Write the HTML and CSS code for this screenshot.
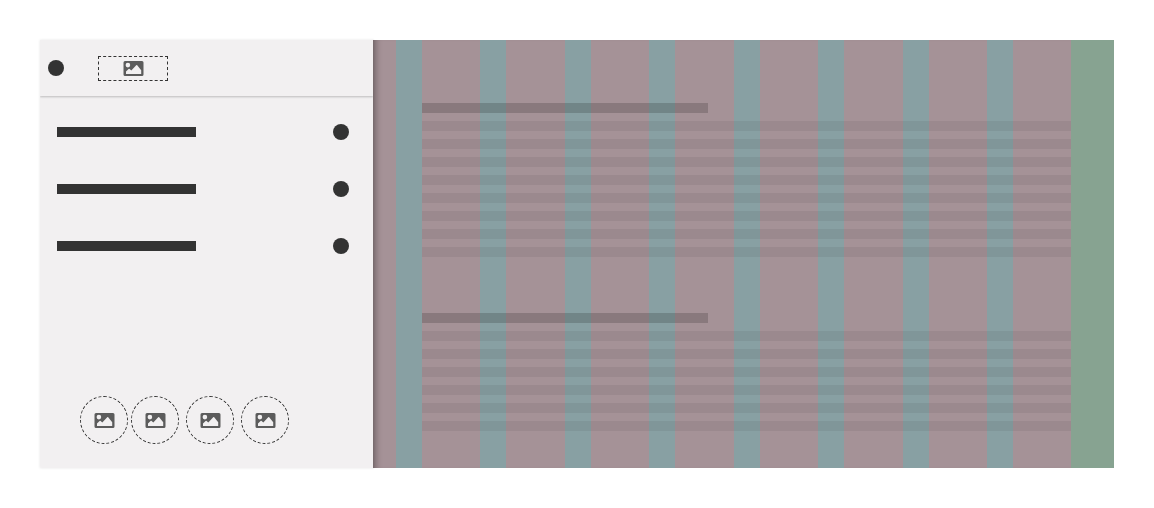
FILE: index.html
```html
<!DOCTYPE html>
<html lang="en">
<head>
<meta charset="utf-8">
<meta name="viewport" content="width=device-width, initial-scale=1">
<title>Navigation drawer</title>
<link rel="stylesheet" href="styles.css">
</head>
<body>
<svg class="defs" aria-hidden="true">
  <symbol id="image" viewBox="0 0 21 17">
    <path fill="#5c5c5c" fill-rule="evenodd" d="M2 1h17a1.500 1.500 0 0 1 1.500 1.500v12a1.500 1.500 0 0 1-1.500 1.500h-17a1.500 1.500 0 0 1-1.500-1.500v-12a1.500 1.500 0 0 1 1.500-1.500zM4.900 2.800a2.300 2.300 0 1 0 0 4.600a2.300 2.300 0 0 0 0-4.600zM3 14h15.200V10.200L14.200 5.300q-.5-.5-1 0L8.300 10.500L6.600 8.900q-.5-.4-1 0L3 11.500z"/>
  </symbol>
</svg>
<div class="layout">
  <aside class="drawer">
    <header class="drawer-header">
      <button class="dot" type="button" aria-label="Close"></button>
      <a class="logo" href="#" aria-label="Home"><svg class="icon"><use href="#image"/></svg></a>
    </header>
    <ul class="menu">
      <li class="menu-item"><span class="label"></span><button class="dot" type="button" aria-label="Expand"></button></li>
      <li class="menu-item"><span class="label"></span><button class="dot" type="button" aria-label="Expand"></button></li>
      <li class="menu-item"><span class="label"></span><button class="dot" type="button" aria-label="Expand"></button></li>
    </ul>
    <nav class="social" aria-label="Social links">
      <a class="badge" href="#" aria-label="Link 1"><svg class="icon"><use href="#image"/></svg></a>
      <a class="badge" href="#" aria-label="Link 2"><svg class="icon"><use href="#image"/></svg></a>
      <a class="badge" href="#" aria-label="Link 3"><svg class="icon"><use href="#image"/></svg></a>
      <a class="badge" href="#" aria-label="Link 4"><svg class="icon"><use href="#image"/></svg></a>
    </nav>
  </aside>
  <main class="page">
    <div class="columns" aria-hidden="true">
      <i></i><i></i><i></i><i></i><i></i><i></i><i></i><i></i>
    </div>
    <div class="content">
      <section class="block">
        <div class="title"></div>
        <div class="line"></div><div class="line"></div><div class="line"></div><div class="line"></div>
        <div class="line"></div><div class="line"></div><div class="line"></div><div class="line"></div>
      </section>
      <section class="block">
        <div class="title"></div>
        <div class="line"></div><div class="line"></div><div class="line"></div>
        <div class="line"></div><div class="line"></div><div class="line"></div>
      </section>
    </div>
  </main>
</div>
</body>
</html>
```
FILE: styles.css
```css
* {
  box-sizing: border-box;
}

body {
  margin: 0;
  background: #fff;
  font-family: "Liberation Sans", Arial, sans-serif;
}

.defs {
  position: absolute;
  width: 0;
  height: 0;
}

.layout {
  display: flex;
  min-height: 100vh;
  padding: 40px;
}

.drawer {
  display: flex;
  flex-direction: column;
  flex: 0 0 333px;
  z-index: 1;
  border-radius: 2px 0 0 2px;
  background: #f2f0f1;
  box-shadow: 0 0 2px 1px rgba(0, 0, 0, 0.05);
}

.drawer-header {
  display: flex;
  align-items: center;
  gap: 34px;
  min-height: 56px;
  padding: 0 8px;
  background: #f2f0f1;
  box-shadow: 0 1px 2px rgba(0, 0, 0, 0.22);
  clip-path: inset(0 0 -4px 0);
}

.dot {
  width: 16px;
  height: 16px;
  padding: 0;
  border: 0;
  border-radius: 50%;
  background: #333;
}

.logo,
.badge {
  display: flex;
  align-items: center;
  justify-content: center;
  border: 1px dashed #333;
}

.logo {
  width: 70px;
  height: 25px;
}

.icon {
  display: block;
  width: 21px;
  height: 17px;
}

.menu {
  display: flex;
  flex-direction: column;
  gap: 41px;
  margin: 0;
  padding: 28px 24px 28px 17px;
  list-style: none;
}

.menu-item {
  display: flex;
  align-items: center;
  justify-content: space-between;
}

.label {
  width: 139px;
  height: 10px;
  background: #333;
}

.social {
  display: flex;
  gap: 7px;
  margin-top: auto;
  padding: 0 40px 24px;
}

.badge {
  width: 48px;
  height: 48px;
  border-radius: 50%;
}

.badge:first-child {
  margin-right: -4px;
}

.page {
  display: grid;
  flex: 1;
  background: #a59297;
  box-shadow: inset 8px 0 6px -5px rgba(0, 0, 0, 0.3);
}

.columns,
.content {
  grid-area: 1 / 1;
}

.columns {
  display: flex;
  justify-content: space-between;
  margin-left: 23px;
  padding-right: 101px;
  background: linear-gradient(#87a391, #87a391) right / 43px 100% no-repeat;
}

.columns i {
  width: 26px;
  background: #88a0a3;
}

.content {
  display: flex;
  flex-direction: column;
  gap: 56px;
  padding: 63px 43px 37px 49px;
}

.block {
  display: flex;
  flex-direction: column;
  gap: 8px;
}

.title {
  width: 44%;
  height: 10px;
  background: rgba(0, 0, 0, 0.17);
}

.line {
  height: 10px;
  background: rgba(0, 0, 0, 0.06);
}
```
